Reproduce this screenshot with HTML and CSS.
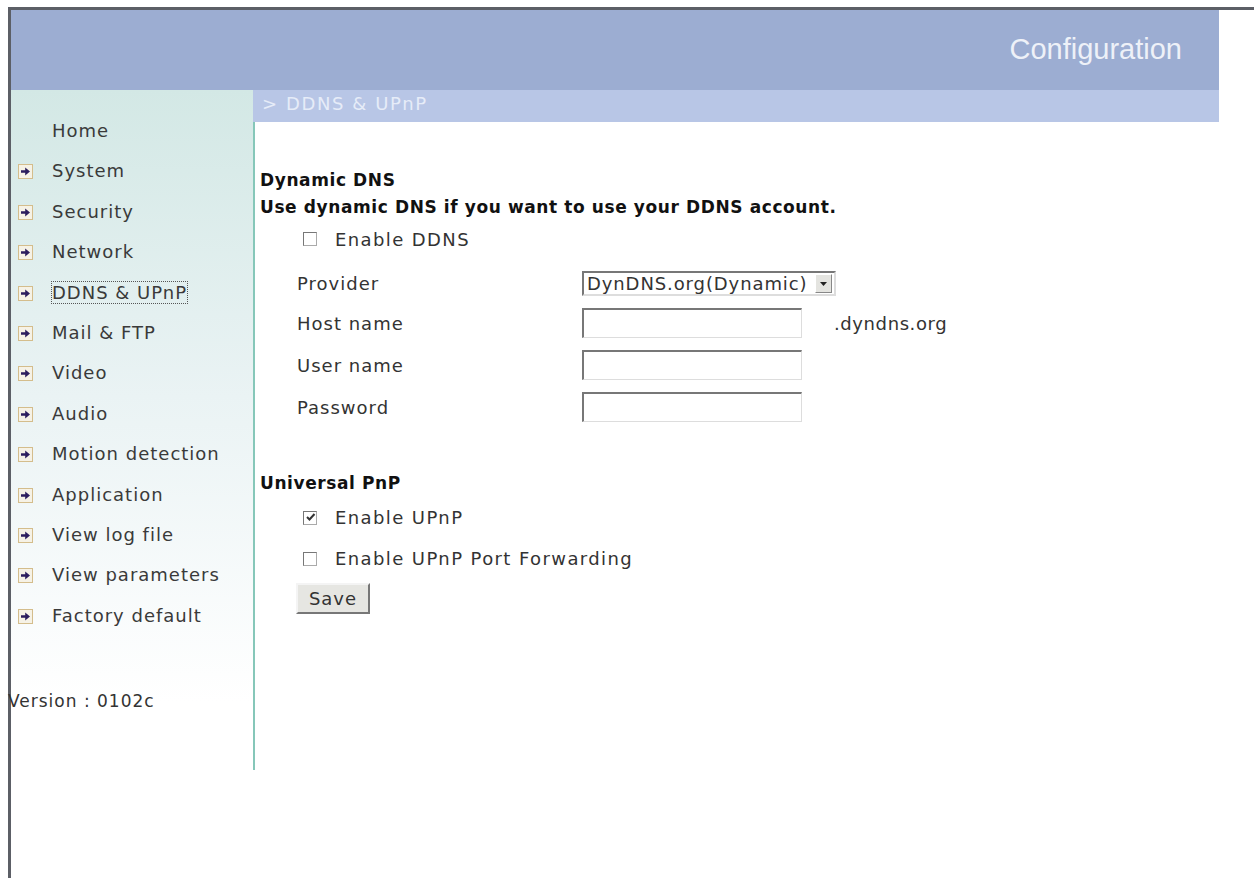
FILE: index.html
```html
<!DOCTYPE html>
<html lang="en">
<head>
  <meta charset="UTF-8" />
  <title>Configuration - DDNS &amp; UPnP</title>
  <link rel="stylesheet" href="styles.css">
</head>
<body>
  <div class="frame">
    <div class="page">
      <div class="header">
        <span class="header-title">Configuration</span>
      </div>

      <div class="main">
        <div class="sidebar">
          <div class="menu">
            <div class="menu-item home">Home</div>
            <div class="menu-item"><svg class="arrow" viewBox="0 0 15 15"><rect x="0.5" y="0.5" width="14" height="14" fill="#f6f2e6" stroke="#d4bd8c"/><path d="M3 6.2h4.2V3.5L12 7.5l-4.8 4V8.8H3z" fill="#2b1d5e"/></svg>System</div>
            <div class="menu-item"><svg class="arrow" viewBox="0 0 15 15"><rect x="0.5" y="0.5" width="14" height="14" fill="#f6f2e6" stroke="#d4bd8c"/><path d="M3 6.2h4.2V3.5L12 7.5l-4.8 4V8.8H3z" fill="#2b1d5e"/></svg>Security</div>
            <div class="menu-item"><svg class="arrow" viewBox="0 0 15 15"><rect x="0.5" y="0.5" width="14" height="14" fill="#f6f2e6" stroke="#d4bd8c"/><path d="M3 6.2h4.2V3.5L12 7.5l-4.8 4V8.8H3z" fill="#2b1d5e"/></svg>Network</div>
            <div class="menu-item"><svg class="arrow" viewBox="0 0 15 15"><rect x="0.5" y="0.5" width="14" height="14" fill="#f6f2e6" stroke="#d4bd8c"/><path d="M3 6.2h4.2V3.5L12 7.5l-4.8 4V8.8H3z" fill="#2b1d5e"/></svg><span class="current">DDNS &amp; UPnP</span></div>
            <div class="menu-item"><svg class="arrow" viewBox="0 0 15 15"><rect x="0.5" y="0.5" width="14" height="14" fill="#f6f2e6" stroke="#d4bd8c"/><path d="M3 6.2h4.2V3.5L12 7.5l-4.8 4V8.8H3z" fill="#2b1d5e"/></svg>Mail &amp; FTP</div>
            <div class="menu-item"><svg class="arrow" viewBox="0 0 15 15"><rect x="0.5" y="0.5" width="14" height="14" fill="#f6f2e6" stroke="#d4bd8c"/><path d="M3 6.2h4.2V3.5L12 7.5l-4.8 4V8.8H3z" fill="#2b1d5e"/></svg>Video</div>
            <div class="menu-item"><svg class="arrow" viewBox="0 0 15 15"><rect x="0.5" y="0.5" width="14" height="14" fill="#f6f2e6" stroke="#d4bd8c"/><path d="M3 6.2h4.2V3.5L12 7.5l-4.8 4V8.8H3z" fill="#2b1d5e"/></svg>Audio</div>
            <div class="menu-item"><svg class="arrow" viewBox="0 0 15 15"><rect x="0.5" y="0.5" width="14" height="14" fill="#f6f2e6" stroke="#d4bd8c"/><path d="M3 6.2h4.2V3.5L12 7.5l-4.8 4V8.8H3z" fill="#2b1d5e"/></svg>Motion detection</div>
            <div class="menu-item"><svg class="arrow" viewBox="0 0 15 15"><rect x="0.5" y="0.5" width="14" height="14" fill="#f6f2e6" stroke="#d4bd8c"/><path d="M3 6.2h4.2V3.5L12 7.5l-4.8 4V8.8H3z" fill="#2b1d5e"/></svg>Application</div>
            <div class="menu-item"><svg class="arrow" viewBox="0 0 15 15"><rect x="0.5" y="0.5" width="14" height="14" fill="#f6f2e6" stroke="#d4bd8c"/><path d="M3 6.2h4.2V3.5L12 7.5l-4.8 4V8.8H3z" fill="#2b1d5e"/></svg>View log file</div>
            <div class="menu-item"><svg class="arrow" viewBox="0 0 15 15"><rect x="0.5" y="0.5" width="14" height="14" fill="#f6f2e6" stroke="#d4bd8c"/><path d="M3 6.2h4.2V3.5L12 7.5l-4.8 4V8.8H3z" fill="#2b1d5e"/></svg>View parameters</div>
            <div class="menu-item"><svg class="arrow" viewBox="0 0 15 15"><rect x="0.5" y="0.5" width="14" height="14" fill="#f6f2e6" stroke="#d4bd8c"/><path d="M3 6.2h4.2V3.5L12 7.5l-4.8 4V8.8H3z" fill="#2b1d5e"/></svg>Factory default</div>
          </div>
          <div class="version">Version : 0102c</div>
        </div>

        <div class="content">
          <div class="subbar">&gt; DDNS &amp; UPnP</div>
          <div class="body">
            <div class="section-title first">Dynamic DNS</div>
            <div class="section-title">Use dynamic DNS if you want to use your DDNS account.</div>

            <label class="check-row ddns">
              <span class="checkbox"></span>Enable DDNS
            </label>

            <div class="form-grid">
              <span class="label">Provider</span>
              <span class="select">
                <span class="select-value">DynDNS.org(Dynamic)</span>
                <span class="select-btn">
                  <svg width="7" height="4" viewBox="0 0 7 4"><path d="M0 0h7L3.5 4z" fill="#222"/></svg>
                </span>
              </span>
              <span></span>

              <span class="label">Host name</span>
              <span class="textbox"></span>
              <span class="suffix">.dyndns.org</span>

              <span class="label">User name</span>
              <span class="textbox"></span>
              <span></span>

              <span class="label">Password</span>
              <span class="textbox"></span>
              <span></span>
            </div>

            <div class="section-title upnp">Universal PnP</div>
            <label class="check-row">
              <span class="checkbox">
                <svg width="11" height="11" viewBox="0 0 11 11"><path d="M2 5l2.5 2.5L9.5 2" fill="none" stroke="#333" stroke-width="2"/></svg>
              </span>Enable UPnP
            </label>
            <label class="check-row">
              <span class="checkbox"></span>Enable UPnP Port Forwarding
            </label>
            <button class="save-btn">Save</button>
          </div>
        </div>
      </div>
    </div>
  </div>
</body>
</html>
```

FILE: styles.css
```css
body {
  margin: 0;
  background: #fff;
  font-family: "DejaVu Sans", Verdana, sans-serif;
  color: #333;
}

.frame {
  margin: 7px 0 0 8px;
  border-top: 3px solid #5c5f66;
  border-left: 3px solid #5c5f66;
  min-height: 871px;
  box-sizing: border-box;
}

.page {
  width: 1208px;
}

.header {
  height: 80px;
  background: #9cadd2;
  display: flex;
  align-items: center;
  justify-content: flex-end;
  padding-right: 37px;
}

.header-title {
  font-family: "Liberation Sans", Arial, sans-serif;
  font-size: 29px;
  color: #eef1f8;
  margin-top: -2px;
}

.main {
  display: flex;
}

.sidebar {
  width: 242px;
  height: 680px;
  background: linear-gradient(180deg, #d3e8e5 0%, #eaf3f4 45%, #ffffff 90%);
}

.menu {
  padding-top: 30px;
}

.menu-item {
  height: 40.4px;
  display: flex;
  align-items: flex-start;
  font-size: 18px;
  letter-spacing: 1px;
  color: #3a3a3a;
  white-space: nowrap;
}

.menu-item.home {
  padding-left: 41px;
}

.arrow {
  width: 15px;
  height: 15px;
  flex: none;
  margin: 4px 19px 0 7px;
}

.current {
  outline: 1px dotted #555;
}

.version {
  margin-top: 46px;
  margin-left: -3px;
  font-size: 17px;
  letter-spacing: 1px;
  color: #333;
}

.content {
  flex: 1;
}

.subbar {
  height: 32px;
  background: #b8c6e6;
  color: #e6ecf8;
  font-size: 18px;
  letter-spacing: 1.6px;
  line-height: 28px;
  padding-left: 9px;
}

.body {
  border-left: 2px solid #86c7b9;
  height: 648px;
  padding-left: 5px;
}

.section-title {
  font-size: 17px;
  letter-spacing: 0.6px;
  font-weight: bold;
  color: #111;
  line-height: 27px;
}

.section-title.first {
  padding-top: 45px;
}

.section-title.upnp {
  margin-top: 48px;
}

.check-row {
  display: flex;
  align-items: center;
  margin-left: 43px;
  height: 41px;
  font-size: 18px;
  letter-spacing: 1.4px;
  color: #333;
}

.check-row.ddns {
  height: 36px;
}

.checkbox {
  width: 12px;
  height: 12px;
  flex: none;
  border: 1px solid #aaa;
  border-top-color: #777;
  border-left-color: #777;
  background: #fff;
  margin-right: 18px;
  display: flex;
  align-items: center;
  justify-content: center;
}

.form-grid {
  display: grid;
  grid-template-columns: 285px 252px auto;
  row-gap: 12px;
  align-items: center;
  margin-left: 37px;
  margin-top: 14px;
}

.label {
  font-size: 18px;
  letter-spacing: 1px;
  color: #333;
}

.select {
  width: 254px;
  height: 25px;
  box-sizing: border-box;
  border: 2px solid #777;
  border-right-color: #ddd;
  border-bottom-color: #ddd;
  display: flex;
  align-items: center;
  justify-content: space-between;
  font-size: 18px;
  letter-spacing: 0.9px;
  background: #fff;
  overflow: hidden;
  white-space: nowrap;
}

.select-value {
  padding-left: 3px;
}

.select-btn {
  width: 15px;
  height: 17px;
  flex: none;
  margin-right: 2px;
  background: #e4e4e0;
  border: 1px solid #fff;
  border-right-color: #888;
  border-bottom-color: #888;
  display: flex;
  align-items: center;
  justify-content: center;
}

.textbox {
  width: 220px;
  height: 30px;
  box-sizing: border-box;
  border: 2px solid #777;
  border-right: 1px solid #ddd;
  border-bottom: 1px solid #ddd;
  background: #fff;
}

.suffix {
  font-size: 18px;
  letter-spacing: 0.6px;
  color: #333;
}

.save-btn {
  display: block;
  margin-left: 36px;
  margin-top: 4px;
  width: 74px;
  height: 31px;
  font-family: "DejaVu Sans", Verdana, sans-serif;
  font-size: 18px;
  letter-spacing: 1px;
  color: #333;
  background: #e6e6e2;
  border: 2px solid #f4f4f4;
  border-right-color: #777;
  border-bottom-color: #777;
  padding: 0;
}
```
